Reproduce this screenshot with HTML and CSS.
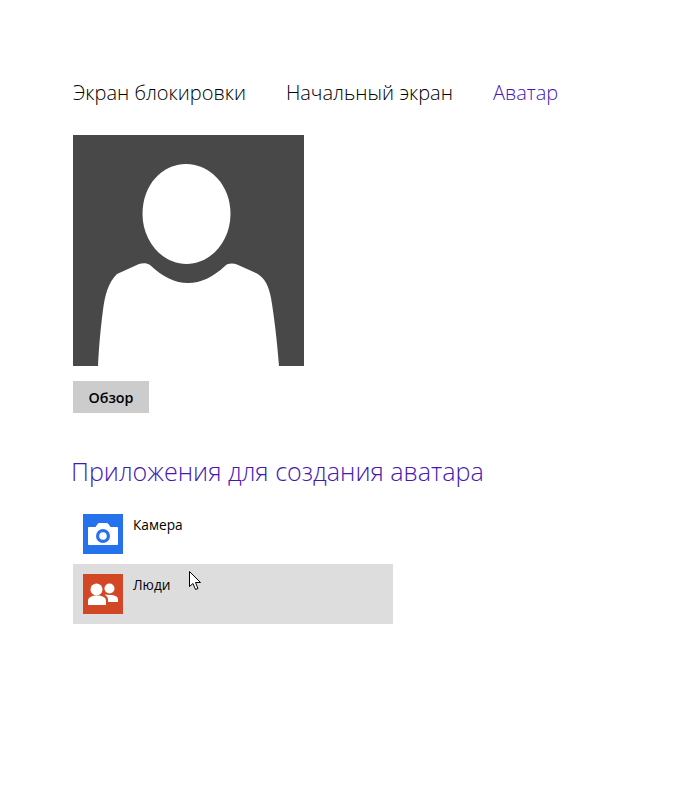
FILE: index.html
```html
<!DOCTYPE html>
<html lang="ru">
<head>
<meta charset="utf-8">
<title>Аватар</title>
<link rel="stylesheet" href="styles.css">
</head>
<body>
<main class="page">
  <nav class="tabs">
    <span class="tab">Экран блокировки</span>
    <span class="tab">Начальный экран</span>
    <span class="tab tab-active">Аватар</span>
  </nav>
  <div class="avatar">
    <svg class="avatar-svg" width="231" height="231" viewBox="0 0 231 231">
      <rect width="231" height="231" fill="#484848"/>
      <path d="M113 29C137 29 157.500 50 157.500 79C157.500 107 137 129 113.500 129C90 129 69.500 107 69.500 79C69.500 50 89 29 113 29Z" fill="#fff"/>
      <path d="M25 231C26 210 28 190 30 175C32 160 35 148 44 139L66 129C70 128 74 128 77 130C90 142 102 148 115 148C128 148 140 142 152 131C155 128 160 128 164 129.500L184 138.500C192 143 196 152 198 163C201 180 204 205 206 231Z" fill="#fff"/>
    </svg>
  </div>
  <button class="browse" type="button">Обзор</button>
  <h2 class="heading">Приложения для создания аватара</h2>
  <ul class="apps">
    <li class="app">
      <span class="tile tile-blue">
        <svg width="40" height="40" viewBox="0 0 40 40">
          <path d="M6 13H12.500L15 9.500C15.300 9.200 15.600 9 16 9H24C24.400 9 24.700 9.200 25 9.500L27.500 13H34C34.600 13 35 13.400 35 14V30C35 30.600 34.600 31 34 31H6C5.400 31 5 30.600 5 30V14C5 13.400 5.400 13 6 13Z" fill="#fff"/>
          <circle cx="20" cy="22" r="7" fill="#2672ec"/>
          <circle cx="20" cy="22" r="3.800" fill="#fff"/>
        </svg>
      </span>
      <span class="app-name">Камера</span>
    </li>
    <li class="app app-hover">
      <span class="tile tile-red">
        <svg width="40" height="40" viewBox="0 0 40 40">
          <circle cx="26.500" cy="14.500" r="5" fill="#fff"/>
          <path d="M21.500 20.500C23 20.800 25 21 27 21C32 21 35 22.500 35 25.500V28H25V25.500C25 23.500 23.500 21.500 21.500 20.500Z" fill="#fff"/>
          <circle cx="13.500" cy="15.500" r="6" fill="#fff"/>
          <path d="M5 31V26.500C5 23.500 9 21.500 14 21.500S23 23.500 23 26.500V31Z" fill="#fff"/>
        </svg>
      </span>
      <span class="app-name">Люди</span>
      <svg class="cursor" width="14" height="20" viewBox="0 0 14 20">
        <path d="M0.500 0.500V15.500L4 12.500L6.500 18.500L9 17.500L6.500 11.500H11.500Z" fill="#fff" stroke="#000" stroke-width="1"/>
      </svg>
    </li>
  </ul>
</main>
</body>
</html>
```

FILE: styles.css
```css
html, body {
  margin: 0;
  padding: 0;
  background: #fff;
}
.page {
  width: 690px;
  height: 800px;
  box-sizing: border-box;
  padding: 79px 0 0 73px;
  font-family: "Open Sans", "Noto Sans", sans-serif;
  color: #000;
  overflow: hidden;
}
.tabs {
  display: flex;
  gap: 40px;
  height: 56px;
  font-size: 20px;
  font-weight: 300;
  line-height: 27px;
}
.tab-active {
  color: #4617b4;
}
.avatar {
  width: 231px;
  height: 231px;
}
.avatar-svg {
  display: block;
}
.browse {
  display: block;
  width: 76px;
  height: 32px;
  margin: 15px 0 0;
  padding: 0;
  border: 0;
  background: #cccccc;
  font-family: inherit;
  font-size: 14.300px;
  font-weight: 600;
  color: #000;
}
.heading {
  margin: 41px 0 0 -2px;
  font-size: 25.100px;
  line-height: 34px;
  font-weight: 300;
  color: #4617b4;
}
.apps {
  list-style: none;
  margin: 16px 0 0;
  padding: 0;
  width: 320px;
}
.app {
  position: relative;
  display: flex;
  gap: 10px;
  height: 60px;
  box-sizing: border-box;
  padding: 10px;
  font-size: 13.700px;
  line-height: 22px;
}
.app-hover {
  background: #dddddd;
}
.tile {
  display: block;
  width: 40px;
  height: 40px;
}
.tile svg {
  display: block;
}
.tile-blue {
  background: #2672ec;
}
.tile-red {
  background: #d24726;
}
.cursor {
  position: absolute;
  left: 116px;
  top: 7px;
}
```
